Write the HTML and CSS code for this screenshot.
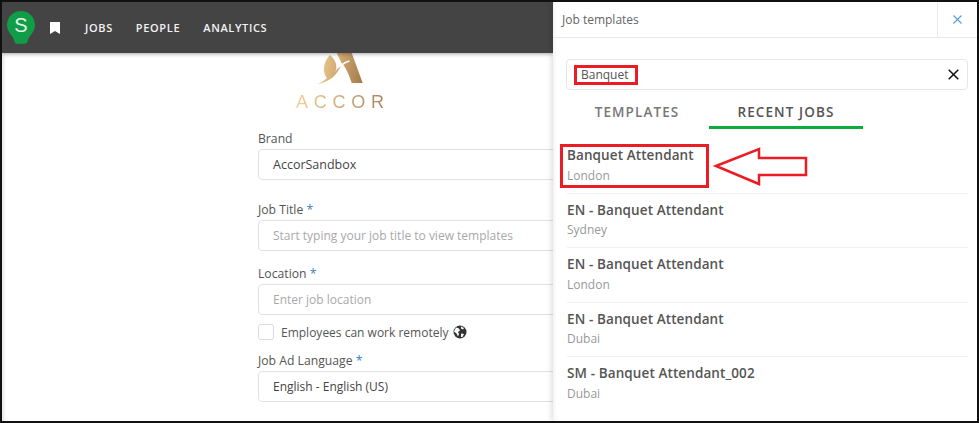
FILE: index.html
```html
<!DOCTYPE html>
<html lang="en">
<head>
<meta charset="utf-8">
<title>Job templates</title>
<link rel="stylesheet" href="styles.css">
</head>
<body>
<div class="frame">
  <div class="app">
    <header class="topbar">
      <svg class="logo-bulb" width="28" height="33" viewBox="0 0 28 33"><path d="M14 0C6.300 0 0 6.200 0 13.800c0 5 2.700 8.500 5 11.500 1.400 1.800 2 3.500 2.400 5 .4 1.500 1 2.300 2.600 2.500h8c1.600-.2 2.200-1 2.600-2.500.4-1.500 1-3.200 2.400-5 2.300-3 5-6.500 5-11.500C28 6.200 21.700 0 14 0z" fill="#0f9d48"/><text x="14" y="21" text-anchor="middle" class="bulb-s">S</text></svg>
      <svg class="bookmark" width="10" height="12" viewBox="0 0 10 12"><path d="M0 0h10v12L5 9 0 12z" fill="#fff"/></svg>
      <nav class="nav"><span>JOBS</span><span>PEOPLE</span><span>ANALYTICS</span></nav>
    </header>
    <main class="form">
      <div class="accor">
        <svg class="accor-mark" width="48" height="32" viewBox="0 0 48 32"><defs><linearGradient id="g" gradientUnits="userSpaceOnUse" x1="2" x2="47" y1="10" y2="20"><stop offset="0" stop-color="#f0cd90"/><stop offset="1" stop-color="#a67c4c"/></linearGradient></defs><path d="M20.700 0H35.700L46.700 30H35.700C33 22 30 14 26 11z" fill="url(#g)"/><path d="M21 18C24.500 12 28.500 9 33.500 8" stroke="#fff" stroke-width="1.600" fill="none"/><path d="M14 2C20 7 22 14 19 19 21 16 23 14 25 13 22 18 20 22 16 25 11 28.500 6 30 2 31 6 29 9 27 11 25 6 20 7 9 14 2z" fill="url(#g)"/></svg>
        <div class="accor-word">ACCOR</div>
      </div>
      <div class="field first">
        <label class="label">Brand</label>
        <div class="input value">AccorSandbox</div>
      </div>
      <div class="field f-title">
        <label class="label">Job Title <em>*</em></label>
        <div class="input ph">Start typing your job title to view templates</div>
      </div>
      <div class="field f-loc">
        <label class="label">Location <em>*</em></label>
        <div class="input ph">Enter job location</div>
      </div>
      <div class="remote">
        <span class="check"></span>
        <span class="remote-text">Employees can work remotely</span>
        <svg width="14" height="14" viewBox="0 0 14 14"><circle cx="7" cy="7" r="6.500" fill="#333"/><path d="M3 2.500l3 1 1 2-2 1.500 1 2-1 2.500-1.500-3-2.500-2zM8 8.500l3 .5-1.500 3H8zM8 1.500l3 1.500-1 1.500-2-1z" fill="#fff"/></svg>
      </div>
      <div class="field f-lang">
        <label class="label">Job Ad Language <em>*</em></label>
        <div class="input value lang">English - English (US)</div>
      </div>
    </main>
  </div>
  <aside class="panel">
    <div class="panel-head">
      <div class="panel-title">Job templates</div>
      <div class="panel-close"><svg width="9" height="9" viewBox="0 0 9 9"><path d="M.5.500l8 8M8.500.500l-8 8" stroke="#5b9bdc" stroke-width="1.100" fill="none"/></svg></div>
    </div>
    <div class="search">
      <span class="search-term">Banquet</span>
      <svg width="11" height="11" viewBox="0 0 11 11"><path d="M.7.700l9.600 9.600M10.300.700L.7 10.300" stroke="#111" stroke-width="1.500" fill="none"/></svg>
    </div>
    <div class="tabs">
      <div class="tab">TEMPLATES</div>
      <div class="tab active">RECENT JOBS</div>
    </div>
    <ul class="jobs">
      <li class="job hit"><div class="job-title">Banquet Attendant</div><div class="job-loc">London</div>
        <svg class="arrow" width="96" height="40" viewBox="0 0 96 40"><path d="M4 20L47 3v9h47v17H47v9z" fill="#fff" stroke="#ec1c24" stroke-width="2.500"/></svg>
      </li>
      <li class="job"><div class="job-title">EN - Banquet Attendant</div><div class="job-loc">Sydney</div></li>
      <li class="job"><div class="job-title">EN - Banquet Attendant</div><div class="job-loc">London</div></li>
      <li class="job"><div class="job-title">EN - Banquet Attendant</div><div class="job-loc">Dubai</div></li>
      <li class="job"><div class="job-title">SM - Banquet Attendant_002</div><div class="job-loc">Dubai</div></li>
    </ul>
  </aside>
</div>
</body>
</html>
```
FILE: styles.css
```css
* { box-sizing: border-box; }
html, body { margin: 0; padding: 0; }
body { width: 979px; height: 423px; overflow: hidden; font-family: "Open Sans", sans-serif; background: #fff; }
.frame { position: relative; display: flex; width: 979px; height: 423px; border: 2px solid #111; overflow: hidden; }
.app { flex: 1; min-width: 0; box-shadow: inset 5px 0 3px -3px #e6e6e6; }
.topbar { display: flex; align-items: center; height: 51px; background: #444; box-shadow: 0 1px 4px rgba(0,0,0,.35); padding-left: 5px; position: relative; }
.logo-bulb { flex: none; }
.bulb-s { font: 20px "Liberation Sans", sans-serif; fill: #e6f5ea; }
.bookmark { flex: none; margin-left: 15px; }
.nav { display: flex; gap: 23px; margin-left: 25px; color: #f2f2f2; font-size: 11px; font-weight: 600; letter-spacing: .65px; }
.form { padding-left: 256px; }
.accor { width: 164px; height: 55px; display: flex; flex-direction: column; align-items: center; }
.accor-mark { flex: none; }
.accor-word { font: 18px "Liberation Sans", sans-serif; letter-spacing: 5.800px; margin-right: -5.800px; line-height: 14px; margin-top: 10px; color: transparent; background: linear-gradient(90deg, #f2d096, #a67f58); -webkit-background-clip: text; background-clip: text; }
.field { width: 700px; }
.first { margin-top: 21px; }
.f-title { margin-top: 20px; }
.f-loc { margin-top: 13px; }
.f-lang { margin-top: 11px; }
.label { display: block; font-size: 12.200px; line-height: 20px; color: #555; height: 20px; }
.label em { font-style: normal; color: #3b82c4; }
.input { height: 31px; border: 1px solid #e2e2e6; border-radius: 4px; padding-left: 14px; font-size: 12px; line-height: 29px; }
.value { color: #444; font-size: 12.500px; }
.lang { font-size: 12px; }
.ph { color: #a9a9a9; }
.remote { display: flex; align-items: center; height: 16px; margin-top: 9px; }
.check { width: 16px; height: 16px; border: 1px solid #dcdce0; border-radius: 3px; margin-right: 7px; }
.remote-text { font-size: 12px; color: #555; margin-right: 5px; }
.panel { flex: none; width: 424px; height: 100%; background: #fff; box-shadow: -2px 0 5px rgba(0,0,0,.12), inset 4px 0 4px -3px rgba(0,0,0,.07); position: relative; }
.panel-head { display: flex; height: 36px; border-bottom: 1px solid #e8e8ec; }
.panel-title { flex: 1; padding-left: 9px; font-size: 12px; line-height: 35px; color: #666; }
.panel-close { width: 40px; border-left: 1px solid #e8e8ec; display: flex; align-items: center; justify-content: center; }
.search { display: flex; align-items: center; justify-content: space-between; margin: 21px 9px 0 13px; height: 31px; border: 1px solid #e6e6ea; border-radius: 4px; padding: 0 8px 0 7px; }
.search-term { border: 3px solid #ec1c24; padding: 0 6px 0 4px; font-size: 12px; line-height: 14px; color: #555; }
.tabs { display: flex; margin-left: 12px; height: 39px; }
.tab { font-size: 13.500px; font-weight: 600; letter-spacing: 1.100px; color: #777; width: 144px; text-align: center; padding-top: 13px; line-height: 18px; }
.tab.active { color: #555; width: 154px; border-bottom: 3px solid #0aad3c; }
.jobs { list-style: none; margin: 10px 9px 0 14px; padding: 0; }
.job { position: relative; height: 54.500px; padding-top: 7px; border-bottom: 1px solid #f0f0f2; }
.job:last-child { border-bottom: 0; }
.job-title { font-size: 13.500px; font-weight: 600; letter-spacing: .1px; line-height: 18px; color: #555; }
.job-loc { font-size: 12px; line-height: 17px; color: #999; margin-top: 2.500px; }
.hit::before { content: ""; box-sizing: border-box; position: absolute; left: -7px; top: 5px; width: 149px; height: 44px; border: 3px solid #ec1c24; }
.arrow { position: absolute; left: 145px; top: 7px; }
```
